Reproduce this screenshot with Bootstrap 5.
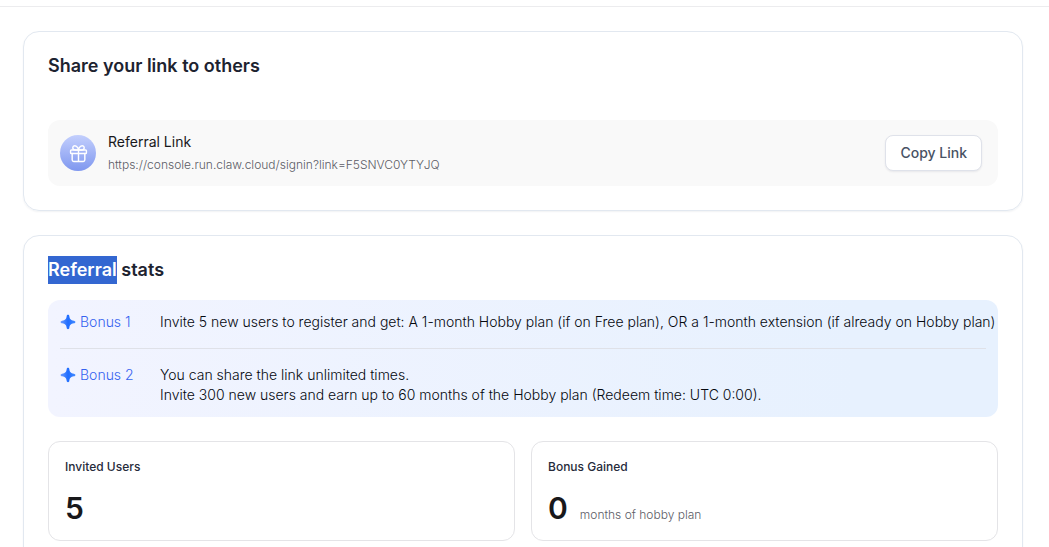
<!DOCTYPE html>
<html lang="en">
<head>
<meta charset="utf-8">
<meta name="viewport" content="width=device-width, initial-scale=1">
<title>Referral</title>
<link href="https://cdn.jsdelivr.net/npm/bootstrap@5.3.0/dist/css/bootstrap.min.css" rel="stylesheet">
<style>
  body { font-family: Inter, "Liberation Sans", sans-serif; font-size: 14px; line-height: 20px; color: #1e2432; }
  .topbar { height: 7px; border-bottom: 1px solid #ececee; }
  .page { padding: 24px 26px 24px 23px; }
  .panel { border: 1px solid #e2e8f0; border-radius: 16px; padding: 20px 24px 24px; box-shadow: 0 1px 2px rgba(20, 30, 60, .06); }
  .panel-title { font-size: 18px; line-height: 28px; font-weight: 600; color: #1d2330; }
  .selected { background: #3367d1; color: #fff; display: inline-block; }
  .link-row { background: #f9f9f9; border-radius: 12px; margin-top: 40px; padding: 12px 16px 12px 12px; }
  .gift { width: 36px; height: 36px; border-radius: 50%; background: linear-gradient(#c3cffd, #7f97ef); }
  .link-name { color: #18181b; }
  .link-url, .unit { font-size: 12px; color: #5c5c66; font-weight: 300; }
  .link-url { line-height: 16px; margin-top: 5px; padding-bottom: 1px; }
  .btn-copy { --bs-btn-color: #485264; --bs-btn-bg: #fff; --bs-btn-border-color: #dfe2ea; --bs-btn-hover-bg: #f8f9fb; --bs-btn-hover-border-color: #dfe2ea; --bs-btn-font-size: 14px; --bs-btn-font-weight: 500; --bs-btn-line-height: 20px; --bs-btn-padding-x: 14px; --bs-btn-padding-y: 7px; --bs-btn-border-radius: 8px; box-shadow: 0 1px 2px rgba(20, 30, 60, .08); }
  .bonuses { background: linear-gradient(90deg, #f2f4ff, #e7f1fe 85%); border-radius: 12px; padding: 12px; margin-top: 16px; }
  .bonus + .bonus { border-top: 1px solid #dfe1e8; margin-top: 16px; padding-top: 16px; }
  .bonus-label { width: 100px; color: #3563f0; }
  .bonus-text { font-weight: 300; color: #05080f; }
  .bonus-label { font-weight: 300; }
  @media (min-width: 1040px) { .bonus-text { white-space: nowrap; } }
  .stat { border: 1px solid #e4e4e7; border-radius: 12px; padding: 16px 16px 14px; height: 100px; }
  .stat-name { font-size: 12px; line-height: 18px; font-weight: 500; color: #262b3b; }
  .stat-value { font-size: 30px; line-height: 36px; font-weight: 600; color: #18181b; }
</style>
</head>
<body class="vh-100 overflow-hidden">
<header class="topbar"></header>
<svg class="position-absolute" width="0" height="0" aria-hidden="true">
  <defs>
    <linearGradient id="spark" x1="0" x2="1"><stop offset="0" stop-color="#6c9cff"/><stop offset=".5" stop-color="#1f6dff"/><stop offset="1" stop-color="#448bff"/></linearGradient>
    <symbol id="star" viewBox="0 0 16 16"><path fill="url(#spark)" d="M8 .7c.8 0 1.2.5 1.3 1.2.4 3 1.4 4.3 4.6 4.8.8.1 1.5.5 1.5 1.3s-.7 1.2-1.5 1.3c-3.2.5-4.2 1.8-4.6 4.8-.1.7-.5 1.2-1.3 1.2s-1.2-.5-1.3-1.2c-.4-3-1.4-4.3-4.6-4.8C1.3 9.2.6 8.8.6 8s.7-1.2 1.5-1.3c3.2-.5 4.2-1.8 4.6-4.8C6.8 1.2 7.2.7 8 .7z"/></symbol>
  </defs>
</svg>
<main class="page d-flex flex-column gap-4">
  <section class="panel">
    <h2 class="panel-title mb-0">Share your link to others</h2>
    <div class="link-row d-flex align-items-center">
      <span class="gift d-flex align-items-center justify-content-center flex-shrink-0">
        <svg width="19" height="19" viewBox="0 0 24 24" fill="none" stroke="#fff" stroke-width="1.8" stroke-linecap="round" stroke-linejoin="round" aria-hidden="true"><rect x="2" y="7.5" width="20" height="4.5" rx="1"/><path d="M4 12v8a2 2 0 0 0 2 2h12a2 2 0 0 0 2-2v-8M12 7.5V22M12 7.5H7.5a2.7 2.7 0 0 1 0-5.4C11 2.1 12 7.5 12 7.5zM12 7.5h4.5a2.7 2.7 0 0 0 0-5.4C13 2.1 12 7.5 12 7.5z"/></svg>
      </span>
      <div class="ms-2 ps-1 flex-grow-1">
        <div class="link-name">Referral Link</div>
        <div class="link-url">https://console.run.claw.cloud/signin?link=F5SNVC0YTYJQ</div>
      </div>
      <button type="button" class="btn btn-copy">Copy Link</button>
    </div>
  </section>
  <section class="panel">
    <h2 class="panel-title mb-0"><span class="selected">Referral</span> stats</h2>
    <div class="bonuses">
      <div class="bonus d-flex">
        <div class="bonus-label d-flex align-items-center align-self-start gap-1 flex-shrink-0"><svg width="16" height="16" aria-hidden="true"><use href="#star"/></svg>Bonus 1</div>
        <div class="bonus-text">Invite 5 new users to register and get: A 1-month Hobby plan (if on Free plan), OR a 1-month extension (if already on Hobby plan)</div>
      </div>
      <div class="bonus d-flex">
        <div class="bonus-label d-flex align-items-center align-self-start gap-1 flex-shrink-0"><svg width="16" height="16" aria-hidden="true"><use href="#star"/></svg>Bonus 2</div>
        <div class="bonus-text">You can share the link unlimited times.<br>Invite 300 new users and earn up to 60 months of the Hobby plan (Redeem time: UTC 0:00).</div>
      </div>
    </div>
    <div class="row gx-3 mt-4">
      <div class="col-6"><div class="stat d-flex flex-column justify-content-between">
        <div class="stat-name">Invited Users</div>
        <div class="stat-value">5</div>
      </div></div>
      <div class="col-6"><div class="stat d-flex flex-column justify-content-between">
        <div class="stat-name">Bonus Gained</div>
        <div class="d-flex align-items-baseline"><span class="stat-value">0</span><span class="unit ms-2 ps-1">months of hobby plan</span></div>
      </div></div>
    </div>
  </section>
</main>
<script src="https://cdn.jsdelivr.net/npm/bootstrap@5.3.0/dist/js/bootstrap.bundle.min.js"></script>
</body>
</html>
